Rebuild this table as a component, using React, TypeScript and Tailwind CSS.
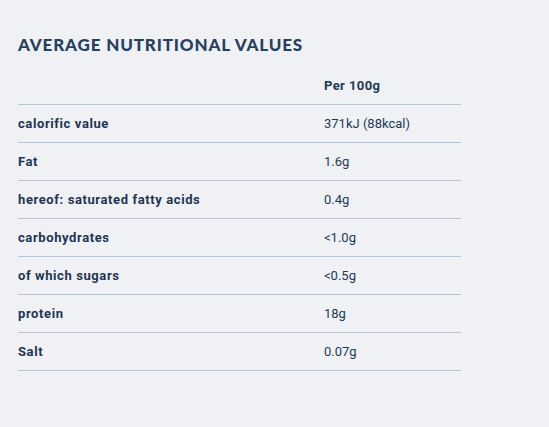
const ROWS = [
  { label: 'calorific value', value: '371kJ (88kcal)' },
  { label: 'Fat', value: '1.6g' },
  { label: 'hereof: saturated fatty acids', value: '0.4g' },
  { label: 'carbohydrates', value: '<1.0g' },
  { label: 'of which sugars', value: '<0.5g' },
  { label: 'protein', value: '18g' },
  { label: 'Salt', value: '0.07g' },
]

export default function App() {
  return (
    <main className="min-h-[427px] bg-[#eff1f5] text-[#233a56] pl-[18px] pt-[35px] font-['Roboto',sans-serif]">
      <h2 className="font-['Lato',sans-serif] font-black text-[17px] leading-[19px] tracking-[0.05em] uppercase text-[#26405f]">
        Average nutritional values
      </h2>

      <div className="w-[443px] mt-[13px]">
        <div className="flex h-[38px] items-center border-b border-[#b9c6d8]">
          <div className="w-[306px]" />
          <div className="text-[13px] font-bold tracking-[0.4px]">Per 100g</div>
        </div>
        {ROWS.map((row) => (
          <div key={row.label} className="flex h-[38px] items-center border-b border-[#b9c6d8]">
            <div className="w-[306px] text-[13px] font-bold tracking-[0.6px] text-[#1f3552]">{row.label}</div>
            <div className="text-[13px]">{row.value}</div>
          </div>
        ))}
      </div>
    </main>
  )
}
